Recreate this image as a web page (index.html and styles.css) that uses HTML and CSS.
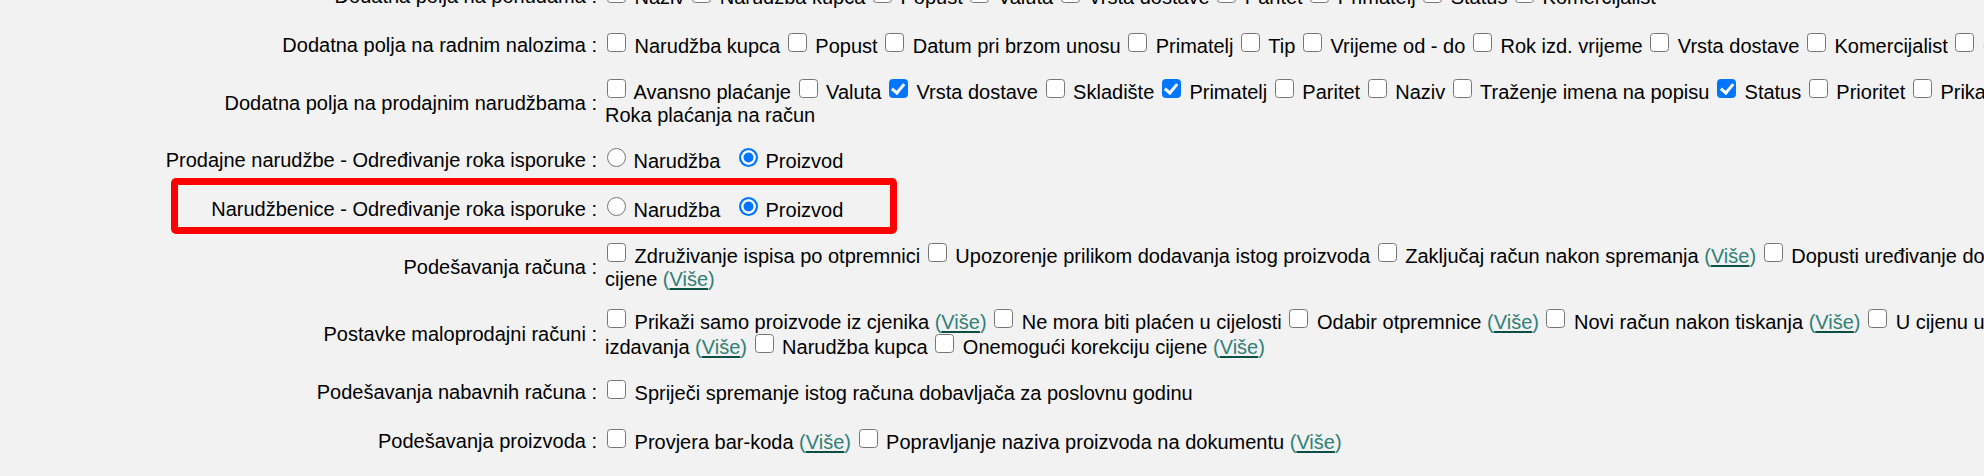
FILE: index.html
```html
<!DOCTYPE html>
<html lang="hr">
<head>
<meta charset="utf-8">
<title>Postavke</title>
<link rel="stylesheet" href="styles.css">
</head>
<body>
<div class="page">
  <table class="settings">
    <colgroup><col class="col-label"><col class="col-value"></colgroup>
    <tr>
      <td class="label">Dodatna polja na ponudama :</td>
      <td class="value">
        <label><input type="checkbox"> Naziv</label>
        <label><input type="checkbox"> Narudžba kupca</label>
        <label><input type="checkbox"> Popust</label>
        <label><input type="checkbox"> Valuta</label>
        <label><input type="checkbox"> Vrsta dostave</label>
        <label><input type="checkbox"> Paritet</label>
        <label><input type="checkbox"> Primatelj</label>
        <label><input type="checkbox"> Status</label>
        <label><input type="checkbox"> Komercijalist</label>
      </td>
    </tr>
    <tr>
      <td class="label">Dodatna polja na radnim nalozima :</td>
      <td class="value">
        <label><input type="checkbox"> Narudžba kupca</label>
        <label><input type="checkbox"> Popust</label>
        <label><input type="checkbox"> Datum pri brzom unosu</label>
        <label><input type="checkbox"> Primatelj</label>
        <label><input type="checkbox"> Tip</label>
        <label><input type="checkbox"> Vrijeme od - do</label>
        <label><input type="checkbox"> Rok izd. vrijeme</label>
        <label><input type="checkbox"> Vrsta dostave</label>
        <label><input type="checkbox"> Komercijalist</label>
        <label><input type="checkbox"> Cjenik</label>
      </td>
    </tr>
    <tr>
      <td class="label">Dodatna polja na prodajnim narudžbama :</td>
      <td class="value">
        <label><input type="checkbox"> Avansno plaćanje</label>
        <label><input type="checkbox"> Valuta</label>
        <label><input type="checkbox" checked> Vrsta dostave</label>
        <label><input type="checkbox"> Skladište</label>
        <label><input type="checkbox" checked> Primatelj</label>
        <label><input type="checkbox"> Paritet</label>
        <label><input type="checkbox"> Naziv</label>
        <label><input type="checkbox"> Traženje imena na popisu</label>
        <label><input type="checkbox" checked> Status</label>
        <label><input type="checkbox"> Prioritet</label>
        <label><input type="checkbox"> Prikaži datum Roka plaćanja na račun</label>
      </td>
    </tr>
    <tr>
      <td class="label">Prodajne narudžbe - Određivanje roka isporuke :</td>
      <td class="value">
        <label><input type="radio" name="rok-prodaja"> Narudžba</label> &nbsp; <label><input type="radio" name="rok-prodaja" checked> Proizvod</label>
      </td>
    </tr>
    <tr>
      <td class="label">Narudžbenice - Određivanje roka isporuke :</td>
      <td class="value">
        <label><input type="radio" name="rok-nabava"> Narudžba</label> &nbsp; <label><input type="radio" name="rok-nabava" checked> Proizvod</label>
      </td>
    </tr>
    <tr>
      <td class="label">Podešavanja računa :</td>
      <td class="value">
        <label><input type="checkbox"> Združivanje ispisa po otpremnici</label>
        <label><input type="checkbox"> Upozorenje prilikom dodavanja istog proizvoda</label>
        <label><input type="checkbox"> Zaključaj račun nakon spremanja</label> <a class="more" href="#">(<u>Više</u>)</a>
        <label><input type="checkbox"> Dopusti uređivanje dokumenta cijene</label> <a class="more" href="#">(<u>Više</u>)</a>
      </td>
    </tr>
    <tr>
      <td class="label">Postavke maloprodajni računi :</td>
      <td class="value">
        <label><input type="checkbox"> Prikaži samo proizvode iz cjenika</label> <a class="more" href="#">(<u>Više</u>)</a>
        <label><input type="checkbox"> Ne mora biti plaćen u cijelosti</label>
        <label><input type="checkbox"> Odabir otpremnice</label> <a class="more" href="#">(<u>Više</u>)</a>
        <label><input type="checkbox"> Novi račun nakon tiskanja</label> <a class="more" href="#">(<u>Više</u>)</a>
        <label><input type="checkbox"> U cijenu uključi izdavanja</label> <a class="more" href="#">(<u>Više</u>)</a>
        <label><input type="checkbox"> Narudžba kupca</label>
        <label><input type="checkbox"> Onemogući korekciju cijene</label> <a class="more" href="#">(<u>Više</u>)</a>
      </td>
    </tr>
    <tr>
      <td class="label">Podešavanja nabavnih računa :</td>
      <td class="value">
        <label><input type="checkbox"> Spriječi spremanje istog računa dobavljača za poslovnu godinu</label>
      </td>
    </tr>
    <tr>
      <td class="label">Podešavanja proizvoda :</td>
      <td class="value">
        <label><input type="checkbox"> Provjera bar-koda</label> <a class="more" href="#">(<u>Više</u>)</a>
        <label><input type="checkbox"> Popravljanje naziva proizvoda na dokumentu</label> <a class="more" href="#">(<u>Više</u>)</a>
      </td>
    </tr>
  </table>
  <div class="highlight"></div>
</div>
</body>
</html>
```

FILE: styles.css
```css
html, body {
  margin: 0;
  padding: 0;
  overflow: hidden;
  background: #f2f2f2;
}

body {
  font-family: "Liberation Sans", Arial, sans-serif;
  font-size: 20px;
  line-height: 23px;
  color: #000;
}

.page {
  position: relative;
  margin-top: -28px;
}

.settings {
  table-layout: fixed;
  width: 2085px;
  border-collapse: collapse;
  border-spacing: 0;
}

.col-label {
  width: 601px;
}

.settings td {
  vertical-align: middle;
}

.label {
  text-align: right;
  padding: 13px 4px 13px 0;
  white-space: nowrap;
}

.value {
  text-align: left;
  padding: 9px 0 9px 4px;
}

/* checkboxes drawn like Chrome's default control, scaled */
.value input[type="checkbox"] {
  -webkit-appearance: none;
  appearance: none;
  position: relative;
  box-sizing: border-box;
  width: 19px;
  height: 19px;
  margin: 0 3px 1px 2px;
  vertical-align: baseline;
  background: #fff;
  border: 1.6px solid #767676;
  border-radius: 3.5px;
}

.value input[type="checkbox"]:checked {
  background: #0075ff;
  border-color: #0075ff;
}

.value input[type="checkbox"]:checked::after {
  content: "";
  position: absolute;
  left: 4.6px;
  top: 0.6px;
  width: 5.2px;
  height: 10.4px;
  border-right: 3px solid #fff;
  border-bottom: 3px solid #fff;
  transform: rotate(40deg);
}

.value input[type="radio"] {
  -webkit-appearance: none;
  appearance: none;
  box-sizing: border-box;
  width: 19px;
  height: 19px;
  margin: 0 2px 1px 2px;
  vertical-align: baseline;
  background: #fff;
  border: 1.6px solid #767676;
  border-radius: 50%;
}

.value input[type="radio"]:checked {
  background: #0075ff;
  border: 2px solid #0075ff;
  box-shadow: inset 0 0 0 2.5px #fff;
}

.more {
  color: #2f8077;
  text-decoration: none;
}

.more u {
  text-decoration-line: underline;
  text-decoration-color: #0b4f45;
  text-decoration-thickness: 2px;
  text-underline-offset: 2px;
}

.highlight {
  position: absolute;
  left: 171px;
  top: 206px;
  width: 726px;
  height: 56px;
  box-sizing: border-box;
  border: 7px solid #ff0000;
  border-radius: 5px;
  pointer-events: none;
}
```
